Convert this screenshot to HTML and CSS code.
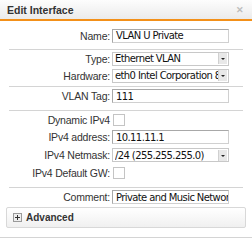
FILE: index.html
```html
<!DOCTYPE html>
<html>
<head>
<meta charset="utf-8">
<link rel="stylesheet" href="styles.css">
</head>
<body>
<div class="dialog">
  <div class="header">
    <span class="title">Edit Interface</span>
    <span class="close">&#x2715;</span>
  </div>
  <div class="body">
    <div class="group g1">
      <div class="row"><label class="lbl">Name:</label><div class="field input">VLAN U Private</div></div>
    </div>
    <div class="group g2">
      <div class="row"><label class="lbl">Type:</label><div class="field select"><span class="val">Ethernet VLAN</span><span class="arrow"></span></div></div>
      <div class="row"><label class="lbl">Hardware:</label><div class="field select"><span class="val">eth0 Intel Corporation 82540EM</span><span class="arrow"></span></div></div>
    </div>
    <div class="group g3">
      <div class="row tall"><label class="lbl">VLAN Tag:</label><div class="field input">111</div></div>
    </div>
    <div class="group g4">
      <div class="row"><label class="lbl">Dynamic IPv4</label><span class="check"></span></div>
      <div class="row tall"><label class="lbl">IPv4 address:</label><div class="field input">10.11.11.1</div></div>
      <div class="row tall"><label class="lbl">IPv4 Netmask:</label><div class="field select"><span class="val">/24 (255.255.255.0)</span><span class="arrow"></span></div></div>
      <div class="row tall"><label class="lbl">IPv4 Default GW:</label><span class="check"></span></div>
    </div>
    <div class="group g5">
      <div class="row tall"><label class="lbl">Comment:</label><div class="field input">Private and Music Network</div></div>
    </div>
    <div class="advanced">
      <span class="plus"></span><span class="adv-text">Advanced</span>
    </div>
  </div>
  <div class="footer"></div>
</div>
</body>
</html>
```
FILE: styles.css
```css
html, body {
  margin: 0;
  padding: 0;
  background: #fff;
}
.dialog {
  width: 252px;
  height: 240px;
  font-family: "Liberation Sans", Arial, sans-serif;
  color: #222;
  overflow: hidden;
}
.header {
  height: 19px;
  background: linear-gradient(#fdfdfd, #ebebeb);
  border-bottom: 2px solid #f39019;
  display: flex;
  align-items: center;
  justify-content: space-between;
  padding: 0 8px 0 7px;
}
.title {
  font-weight: bold;
  font-size: 10.5px;
  color: #333;
}
.close {
  font-size: 9px;
  font-weight: bold;
  color: #bdbdbd;
}
.body {
  padding: 5px 9px 0 9px;
}
.group {
  border-bottom: 1px solid #d4d4d4;
}
.g1 { padding: 1px 0 5px; }
.g2 { padding: 0 0 2px; }
.g3 { padding: 0 0 5px; }
.g4 { padding: 0 0 5px; }
.g5 { padding: 0; border-bottom: none; }
.row {
  display: flex;
  align-items: center;
  height: 17px;
}
.row.tall {
  height: 18px;
}
.lbl {
  width: 101px;
  text-align: right;
  font-size: 10.5px;
  letter-spacing: -0.2px;
  color: #333;
  padding-right: 2px;
  flex: none;
  white-space: nowrap;
}
.field {
  width: 117px;
  height: 14px;
  box-sizing: border-box;
  font-family: "DejaVu Sans", Verdana, sans-serif;
  font-size: 10px;
  letter-spacing: -0.6px;
  color: #111;
  white-space: nowrap;
  overflow: hidden;
  display: flex;
  align-items: center;
}
.input {
  border: 1px solid #a8a8a8;
  border-right-color: #d0d0d0;
  border-bottom-color: #d0d0d0;
  padding-left: 3px;
}
.select {
  border: 1px solid #c8c8c8;
  padding-left: 2px;
  position: relative;
}
.select .val {
  flex: 1;
  overflow: hidden;
}
.select .arrow {
  width: 8px;
  height: 11px;
  background: #e8e8e8;
  border-left: 1px solid #d0d0d0;
  flex: none;
  position: relative;
  margin-right: 1px;
}
.select .arrow::after {
  content: "";
  position: absolute;
  left: 2px;
  top: 5px;
  border-left: 2px solid transparent;
  border-right: 2px solid transparent;
  border-top: 2px solid #222;
}
.check {
  width: 12px;
  height: 12px;
  box-sizing: border-box;
  border: 1px solid #c4c4c4;
  margin-left: 1px;
  background: #fff;
}
.advanced {
  margin: 1px -3px 0 -3px;
  height: 19px;
  border: 1px solid #d8d8d8;
  border-radius: 2px;
  background: linear-gradient(#ffffff, #f0f0f0);
  display: flex;
  align-items: center;
  padding-left: 6px;
}
.plus {
  width: 7px;
  height: 7px;
  border: 1px solid #9a9a9a;
  background: #eee;
  position: relative;
  margin-right: 4px;
}
.plus::before {
  content: "";
  position: absolute;
  left: 1px;
  top: 3px;
  width: 5px;
  height: 1px;
  background: #333;
}
.plus::after {
  content: "";
  position: absolute;
  left: 3px;
  top: 1px;
  width: 1px;
  height: 5px;
  background: #333;
}
.adv-text {
  font-weight: bold;
  font-size: 10px;
  color: #333;
}
.footer {
  margin-top: 9px;
  border-top: 1px solid #d4d4d4;
}
```
